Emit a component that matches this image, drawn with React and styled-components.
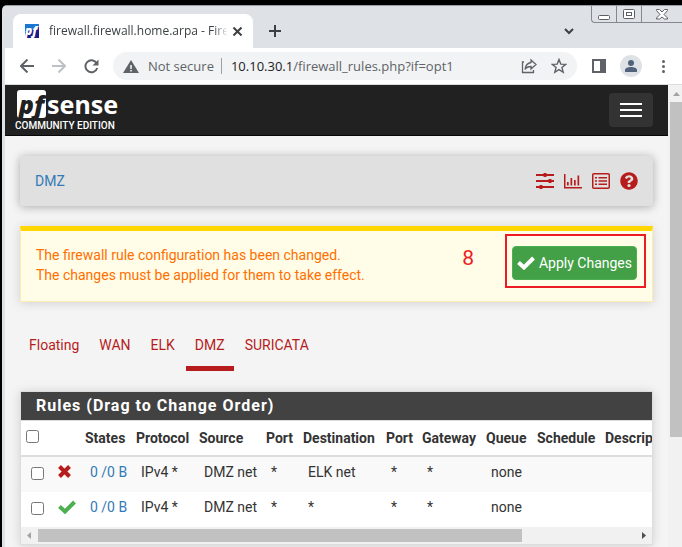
import React from "react";
import styled, { createGlobalStyle } from "styled-components";
import { FaQuestionCircle } from "react-icons/fa";

const GlobalStyle = createGlobalStyle`
  * { box-sizing: border-box; }
  body { margin: 0; background: #000; font-family: Roboto, sans-serif; font-size: 14px; line-height: 20px; color: #333; }
  button { font: inherit; margin: 0; padding: 0; border: 0; background: none; color: inherit; }
  a { color: #337ab7; text-decoration: none; }
  svg { display: block; flex: none; }
`;

const chromeFont = `"Open Sans", "Noto Sans", sans-serif`;

const Desktop = styled.div`
  height: 100vh;
  overflow: hidden;
  padding: 5px 0 0 2px;
`;
const BrowserWindow = styled.div`
  height: 100%;
  display: flex;
  flex-direction: column;
  border-left: 3px solid #dee1e6;
  border-top: 1px solid #9a9da3;
  border-top-left-radius: 5px;
  background: #dee1e6;
`;
const TabStrip = styled.header`
  flex: none;
  display: flex;
  height: 42px;
  padding-left: 8px;
`;
const BrowserTab = styled.div`
  display: flex;
  align-items: center;
  width: 240px;
  height: 34px;
  margin-top: 8px;
  padding: 0 9px 0 12px;
  border-radius: 8px 8px 0 0;
  background: #fff;
`;
const TabTitle = styled.span`
  flex: 1;
  margin: 0 2px 0 10px;
  overflow: hidden;
  white-space: nowrap;
  font: 12px/20px ${chromeFont};
  color: #3c4043;
  mask-image: linear-gradient(to right, #000 92%, transparent);
`;
const IconButton = styled.button`
  flex: none;
  display: grid;
  place-items: center;
  width: ${(p) => p.$w || 32}px;
  height: ${(p) => p.$h || 28}px;
  color: ${(p) => p.$color || "#5f6368"};
`;
const NewTab = styled(IconButton)`
  margin: 11px auto 0 6px;
`;
const TabSearch = styled(IconButton)`
  margin-top: 11px;
  margin-right: 6px;
`;
const Caption = styled.div`
  display: flex;
  width: 91px;
  height: 17px;
  border: 1px solid #85888e;
  border-width: 0 0 1px 1px;
  border-bottom-left-radius: 4px;
`;
const CaptionButton = styled(IconButton)`
  border-right: ${(p) => (p.$last ? 0 : 1)}px solid #85888e;
`;
const Toolbar = styled.div`
  flex: none;
  display: flex;
  align-items: center;
  height: 37px;
  padding: 0 3px 0 6px;
  border-bottom: 1px solid #dadce0;
  background: #fff;
`;
const AddressBar = styled.div`
  flex: 1;
  display: flex;
  align-items: center;
  min-width: 0;
  height: 28px;
  margin: 0 6px 0 6px;
  padding: 0 4px 0 10px;
  border-radius: 14px;
  background: #f1f3f4;
  font: 13px/20px ${chromeFont};
  color: #5f6368;
`;
const Secure = styled.span`
  padding: 0 7px 0 9px;
  border-right: 1px solid #9aa0a6;
  line-height: 16px;
`;
const Url = styled.span`
  flex: 1;
  padding-left: 9px;
  white-space: nowrap;
  overflow: hidden;
  b { font-weight: 400; color: #202124; }
`;
const Avatar = styled.span`
  display: grid;
  place-items: end center;
  width: 22px;
  height: 22px;
  padding-bottom: 5px;
  border-radius: 50%;
  background: #dee1e6;
`;

const Viewport = styled.div`
  flex: 1;
  display: flex;
  min-height: 0;
  background: #f4f4f4;
`;
const Page = styled.div`
  flex: 1;
  min-width: 0;
  overflow: hidden;
`;
const ScrollTrack = styled.div`
  flex: none;
  display: flex;
  flex-direction: column;
  width: 14px;
  padding-left: 2px;
  background: #f1f1f1;
  svg { margin: 7px 0 6px 3px; }
`;
const ScrollThumb = styled.div`
  flex: 0 0 335px;
  background: #c1c1c1;
`;
const Navbar = styled.nav`
  display: flex;
  align-items: center;
  justify-content: space-between;
  height: 51px;
  padding: 0 15px 0 10px;
  border-bottom: 1px solid #080808;
  background: #212121;
`;
const Brand = styled.a`
  color: #fff;
`;
const LogoRow = styled.span`
  display: flex;
  align-items: center;
  height: 28px;
  margin: 3px 0 1px;
  padding-left: 2px;
`;
const LogoMark = styled.span`
  width: 29px;
  height: 28px;
  border-radius: 3px;
  background: #fff;
  color: #212121;
  text-align: center;
  font: italic 800 25px/28px "Open Sans", sans-serif;
`;
const LogoWord = styled.span`
  padding-left: 1px;
  font: 700 25px/28px "Noto Sans", sans-serif;
`;
const Edition = styled.span`
  display: block;
  font-size: 10px;
  line-height: 14px;
  font-weight: 500;
`;
const MenuButton = styled.button`
  display: flex;
  flex-direction: column;
  justify-content: center;
  gap: 4px;
  width: 44px;
  height: 34px;
  padding: 0 11px;
  border-radius: 4px;
  background: #333;
  i { height: 2px; background: #fff; }
`;
const Main = styled.main`
  padding: 20px 15px 0;
`;
const Breadcrumb = styled.div`
  display: flex;
  align-items: center;
  justify-content: space-between;
  height: 50px;
  margin-bottom: 20px;
  padding: 0 15px;
  border-radius: 3px;
  background: #e0e0e0;
  box-shadow: 0 1px 10px rgba(0, 0, 0, 0.3);
`;
const Shortcuts = styled.div`
  display: flex;
  gap: 10px;
  a { color: #b71c1c; }
`;
const Alert = styled.section`
  position: relative;
  display: flex;
  justify-content: space-between;
  min-height: 76px;
  padding: 14px 15px;
  border: 1px solid #ffecb3;
  border-top: 5px solid #ffd600;
  background: #fffde7;
  box-shadow: 0 1px 10px rgba(0, 0, 0, 0.15);
  color: #ff6f00;
  p { margin: 0; }
`;
const ApplyButton = styled.button`
  display: flex;
  align-items: center;
  justify-content: center;
  gap: 4px;
  width: 125px;
  height: 34px;
  margin-top: 1px;
  border: 1px solid #4caf50;
  border-radius: 4px;
  background: #43a047;
  color: #fff;
  white-space: nowrap;
`;
const Highlight = styled.div`
  position: absolute;
  top: 3px;
  right: 6px;
  width: 141px;
  height: 54px;
  border: 2px solid #ed1c24;
`;
const StepNumber = styled.span`
  position: absolute;
  top: 15px;
  right: 178px;
  font: 400 21px/24px Roboto, sans-serif;
  color: #ed1c24;
`;
const Tabs = styled.ul`
  display: flex;
  gap: 2px;
  margin: 29px 0 20px;
  padding: 0;
  list-style: none;
`;
const TabLink = styled.a`
  display: block;
  padding: 4px 9px 11px;
  border-bottom: 5px solid ${(p) => (p.$active ? "#b71c1c" : "transparent")};
  color: #b71c1c;
`;
const Panel = styled.section`
  border: 1px solid #ddd;
  background: #fff;
  box-shadow: 0 1px 10px rgba(0, 0, 0, 0.15);
  overflow: hidden;
`;
const PanelTitle = styled.h2`
  margin: 0;
  padding: 4px 15px;
  background: #424242;
  color: #fff;
  font-size: 16px;
  line-height: 20px;
  font-weight: 700;
  letter-spacing: 1px;
`;
const TableScroll = styled.div`
  overflow: hidden;
  border-top: 1px solid #ddd;
`;
const RulesTable = styled.table`
  width: 780px;
  table-layout: fixed;
  border-collapse: separate;
  border-spacing: 0;
  white-space: nowrap;
`;
const Th = styled.th`
  height: 36px;
  padding: 0 5px;
  border-bottom: 2px solid #ddd;
  text-align: left;
  font-weight: 700;
`;
const Row = styled.tr`
  background: ${(p) => (p.$striped ? "#f9f9f9" : "#fff")};
  & + & td { height: 36px; border-top: 1px solid #ddd; }
`;
const Td = styled.td`
  height: 35px;
  padding: 0 10px 6px;
`;
const Check = styled.input`
  display: block;
  width: 13px;
  height: 13px;
  margin: ${(p) => (p.$head ? "0 0 3px" : "4px 0 0")};
`;
const HScroll = styled.div`
  display: flex;
  align-items: center;
  justify-content: space-between;
  height: 17px;
  padding: 0 6px;
  background: #f1f1f1;
`;
const HTrack = styled.div`
  flex: 1;
  height: 13px;
  margin: 0 7px;
`;
const HThumb = styled.div`
  width: 81%;
  height: 100%;
  background: #c1c1c1;
`;

const Line = ({ d, size = 16, w = 2, box = 16, color = "currentColor", ...rest }) => (
  <svg width={size} height={size} viewBox={`0 0 ${box} ${box}`} fill="none" stroke={color} strokeWidth={w} {...rest}>
    <path d={d} />
  </svg>
);
const Favicon = () => (
  <svg width="14" height="14" viewBox="0 0 14 14">
    <path d="M0 0h14v4L0 8z" fill="#1976d2" />
    <path d="M0 8 14 3v11H0z" fill="#1a1a8c" />
    <text x="0" y="11" fill="#fff" fontFamily="Open Sans" fontStyle="italic" fontWeight="800" fontSize="12">pf</text>
  </svg>
);
const Tick = ({ color, size = 18 }) => (
  <svg width={size} height="14" viewBox="0 0 18 14" fill="none" stroke={color} strokeWidth="4">
    <path d="M1.5 6.5 7 11.5 16.5 2" />
  </svg>
);
const Triangle = ({ d, color, w = 7, h = 7 }) => (
  <svg width={w} height={h} viewBox={`0 0 ${w} ${h}`}><path d={d} fill={color} /></svg>
);

const columns = [
  ["", 27], ["", 32], ["States", 51], ["Protocol", 63], ["Source", 67], ["Port", 37],
  ["Destination", 83], ["Port", 36], ["Gateway", 64], ["Queue", 51], ["Schedule", 68], ["Description", 201],
];
const rules = [
  { pass: false, cells: ["IPv4 *", "DMZ net", "*", "ELK net", "*", "*", "none", "", ""] },
  { pass: true, cells: ["IPv4 *", "DMZ net", "*", "*", "*", "*", "none", "", ""] },
];
const tabs = ["Floating", "WAN", "ELK", "DMZ", "SURICATA"];

function Chrome() {
  return (
    <>
      <TabStrip>
        <BrowserTab>
          <Favicon />
          <TabTitle>firewall.firewall.home.arpa - Firewall</TabTitle>
          <IconButton $w={14} $color="#3c4043" aria-label="Close tab"><Line size={9} box={9} d="M.5.5l8 8M8.500.5l-8 8" /></IconButton>
        </BrowserTab>
        <NewTab $color="#3c4043" aria-label="New tab"><Line size={12} box={12} d="M6 0v12M0 6h12" /></NewTab>
        <TabSearch $color="#3c4043" aria-label="Search tabs"><Line size={10} box={10} d="M1 3l4 4 4-4" /></TabSearch>
        <Caption>
          <CaptionButton $w={25} $h={16} aria-label="Minimize">
            <svg width="12" height="12" fill="#fff" stroke="#5c5f66"><rect x=".5" y="7.5" width="11" height="4" rx="1" /></svg>
          </CaptionButton>
          <CaptionButton $w={25} $h={16} aria-label="Maximize">
            <svg width="12" height="11" fill="#fff" stroke="#5c5f66"><rect x=".5" y=".5" width="11" height="9" rx="1" /><rect x="3.5" y="3.5" width="5" height="3" /></svg>
          </CaptionButton>
          <CaptionButton $w={40} $h={16} $last aria-label="Close">
            <svg width="12" height="11" viewBox="0 0 12 11" fill="#fff" stroke="#5c5f66"><path d="M.5.5h3L6 3 8.500.5h3v1L8 5.500l3.500 3.500v1h-3L6 8l-2.500 2h-3V9L4 5.500.5 1.500z" /></svg>
          </CaptionButton>
        </Caption>
      </TabStrip>
      <Toolbar>
        <IconButton aria-label="Back"><Line size={14} box={14} d="M14 7H1M7.500.5 1 7l6.500 6.500" /></IconButton>
        <IconButton $color="#bdc1c6" aria-label="Forward"><Line size={14} box={14} d="M0 7h13M6.500.5 13 7l-6.500 6.500" /></IconButton>
        <IconButton aria-label="Reload">
          <svg width="15" height="15" viewBox="0 0 15 15" fill="none" stroke="currentColor" strokeWidth="2"><path d="M12.500 4A6 6 0 1 0 13.200 9" /><path d="M14.500.5v6h-6z" fill="currentColor" stroke="none" /></svg>
        </IconButton>
        <AddressBar>
          <svg width="16" height="13" viewBox="0 0 16 13"><path d="M8 0l8 13H0z" fill="#5f6368" /><path d="M7.200 5h1.600v4H7.200zM7.200 10h1.600v1.500H7.200z" fill="#f1f3f4" /></svg>
          <Secure>Not secure</Secure>
          <Url><b>10.10.30.1</b>/firewall_rules.php?if=opt1</Url>
          <IconButton aria-label="Share">
            <Line w={1.3} d="M3 4H1.500v10.500h11V12M10 2l5 4.500-5 4.500V8.500C7.500 8.500 5.500 9 4 11.500 4.500 7.500 6.500 5 10 4.500z" />
          </IconButton>
          <IconButton $w={28} aria-label="Bookmark">
            <Line w={1.4} d="M8 1.500l1.800 4.600 4.900.3-3.800 3.100 1.300 4.800L8 11.600l-4.200 2.700 1.300-4.800L1.300 6.400l4.900-.3z" />
          </IconButton>
        </AddressBar>
        <IconButton aria-label="Side panel">
          <svg width="14" height="14"><rect x="1" y="1" width="12" height="12" fill="none" stroke="#5f6368" strokeWidth="2" /><rect x="8" width="6" height="14" fill="#5f6368" /></svg>
        </IconButton>
        <IconButton aria-label="Profile">
          <Avatar><svg width="12" height="12" fill="#50627c"><circle cx="6" cy="3" r="3" /><path d="M0 12v-2c0-4 12-4 12 0v2z" /></svg></Avatar>
        </IconButton>
        <IconButton aria-label="Menu">
          <svg width="3" height="13" fill="#5f6368"><circle cx="1.500" cy="1.500" r="1.500" /><circle cx="1.500" cy="6.500" r="1.500" /><circle cx="1.500" cy="11.500" r="1.500" /></svg>
        </IconButton>
      </Toolbar>
    </>
  );
}

function RulesPanel() {
  return (
    <Panel>
      <PanelTitle>Rules (Drag to Change Order)</PanelTitle>
      <TableScroll>
        <RulesTable>
          <colgroup>{columns.map(([, w], i) => <col key={i} width={w} />)}</colgroup>
          <thead>
            <tr>
              {columns.map(([name], i) => (
                <Th key={i} scope="col">{i === 0 ? <Check $head type="checkbox" aria-label="Select all rules" /> : name}</Th>
              ))}
            </tr>
          </thead>
          <tbody>
            {rules.map((rule, i) => (
              <Row key={i} $striped={i % 2 === 0}>
                <Td><Check type="checkbox" aria-label={`Select rule ${i + 1}`} /></Td>
                <Td>{rule.pass ? <Tick color="#4caf50" /> : <Line size={13} box={13} w={4} color="#b71c1c" d="M1.500 1.500l10 10M11.500 1.500l-10 10" />}</Td>
                <Td><a href="#states">0 /0 B</a></Td>
                {rule.cells.map((cell, j) => <Td key={j}>{cell}</Td>)}
              </Row>
            ))}
          </tbody>
        </RulesTable>
      </TableScroll>
      <HScroll>
        <Triangle w={4} d="M4 0v7L0 3.500z" color="#a3a3a3" />
        <HTrack><HThumb /></HTrack>
        <Triangle w={4} d="M0 0v7l4-3.500z" color="#505050" />
      </HScroll>
    </Panel>
  );
}

export default function App() {
  return (
    <Desktop>
      <GlobalStyle />
      <BrowserWindow>
        <Chrome />
        <Viewport>
          <Page>
            <Navbar>
              <Brand href="#home">
                <LogoRow><LogoMark>pf</LogoMark><LogoWord>sense</LogoWord></LogoRow>
                <Edition>COMMUNITY EDITION</Edition>
              </Brand>
              <MenuButton aria-label="Toggle navigation"><i /><i /><i /></MenuButton>
            </Navbar>
            <Main>
              <Breadcrumb>
                <a href="#dmz">DMZ</a>
                <Shortcuts>
                  <a href="#settings" aria-label="Settings">
                    <svg width="18" height="18" viewBox="0 0 18 18" fill="currentColor"><path d="M0 2h18v2H0zM0 8h18v2H0zM0 14h18v2H0z" /><rect x="7.500" y="1" width="3" height="4" rx=".5" /><rect x="12.500" y="7" width="3" height="4" rx=".5" /><rect x="3.500" y="13" width="3" height="4" rx=".5" /></svg>
                  </a>
                  <a href="#status" aria-label="Status">
                    <svg width="18" height="18" viewBox="0 0 18 18" fill="currentColor"><path d="M0 2h1.500v13H18v1.500H0zM3 10h1.700v3.500H3zM6.500 6h1.700v7.500H6.500zM10 8h1.700v5.500H10zM13.500 3.500h1.700v10h-1.700z" /></svg>
                  </a>
                  <a href="#logs" aria-label="Logs">
                    <svg width="18" height="18" viewBox="0 0 18 18" fill="currentColor"><rect x=".75" y="1.750" width="16.500" height="14.500" rx="1" fill="none" stroke="currentColor" strokeWidth="1.500" /><path d="M3 5h2v1.500H3zM6.500 5H15v1.500H6.500zM3 8.250h2v1.500H3zM6.500 8.250H15v1.500H6.500zM3 11.500h2V13H3zM6.500 11.500H15V13H6.500z" /></svg>
                  </a>
                  <a href="#help" aria-label="Help"><FaQuestionCircle size={18} /></a>
                </Shortcuts>
              </Breadcrumb>
              <Alert>
                <p>The firewall rule configuration has been changed.<br />The changes must be applied for them to take effect.</p>
                <ApplyButton><Tick color="#fff" />Apply Changes</ApplyButton>
                <StepNumber>8</StepNumber>
                <Highlight />
              </Alert>
              <Tabs>
                {tabs.map((name) => <li key={name}><TabLink href={`#${name}`} $active={name === "DMZ"}>{name}</TabLink></li>)}
              </Tabs>
              <RulesPanel />
            </Main>
          </Page>
          <ScrollTrack>
            <Triangle d="M3.500 0 7 4H0z" h={4} color="#a3a3a3" />
            <ScrollThumb />
          </ScrollTrack>
        </Viewport>
      </BrowserWindow>
    </Desktop>
  );
}
